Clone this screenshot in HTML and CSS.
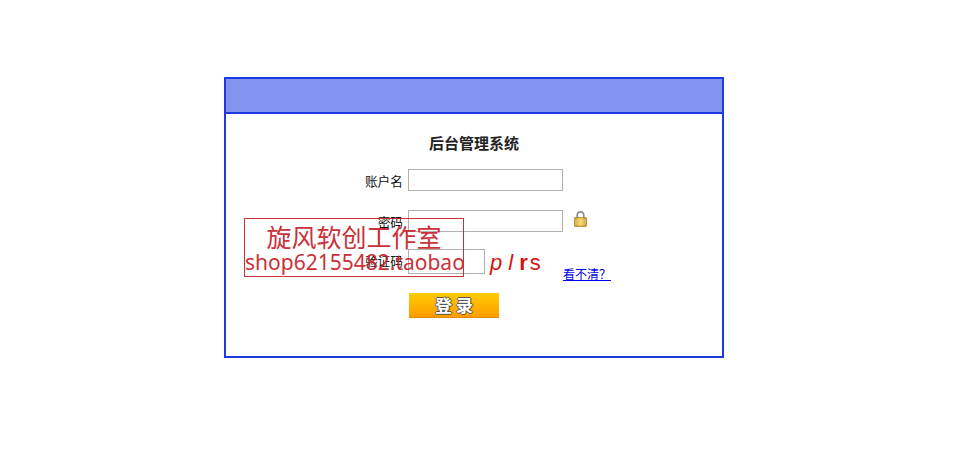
FILE: index.html
```html
<!DOCTYPE html>
<html lang="zh">
<head>
<meta charset="utf-8">
<title>后台管理系统</title>
<link rel="stylesheet" href="styles.css">
</head>
<body>
<div class="panel">
  <div class="panel-head"></div>
  <div class="panel-body">
    <h1 class="title">后台管理系统</h1>
    <form class="form">
      <div class="row row-user">
        <label class="label">账户名</label>
        <input class="input" type="text">
      </div>
      <div class="row row-pass">
        <label class="label">密码</label>
        <input class="input" type="password">
        <svg class="lock" width="13" height="16" viewBox="0 0 13 16">
          <defs>
            <linearGradient id="lockbody" x1="0" y1="0" x2="1" y2="0">
              <stop offset="0" stop-color="#c09028"/>
              <stop offset=".5" stop-color="#f4cf62"/>
              <stop offset="1" stop-color="#b88a24"/>
            </linearGradient>
          </defs>
          <path d="M3.200 7V4.200a3.300 3.300 0 0 1 6.600 0V7" fill="none" stroke="#8c8c8c" stroke-width="1.700"/>
          <rect x=".5" y="6.500" width="12" height="9" rx=".8" fill="url(#lockbody)" stroke="#a87e22" stroke-width=".7"/>
          <path d="M1 9h11M1 11h11M1 13h11" stroke="#fff0a8" stroke-width=".8" opacity=".75"/>
        </svg>
      </div>
      <div class="row row-code">
        <label class="label">验证码</label>
        <input class="input input-code" type="text">
        <span class="captcha"><i>p</i><i>l</i><b>r</b><span>s</span></span>
        <a class="refresh" href="#">看不清？</a>
      </div>
      <button class="submit" type="button">登&nbsp;录</button>
    </form>
  </div>
</div>
<div class="stamp">
  <div class="stamp-name">旋风软创工作室</div>
  <div class="stamp-shop">shop62155482.taobao</div>
</div>
</body>
</html>
```
FILE: styles.css
```css
* { box-sizing: border-box; }
html, body { margin: 0; padding: 0; }
body {
  background: #fff;
  color: #111;
  font-family: "Liberation Sans", "Noto Sans CJK SC", sans-serif;
  font-size: 13px;
  padding: 77px 0 0 224px;
  position: relative;
  height: 455px;
  overflow: hidden;
}
.panel {
  width: 500px;
  height: 281px;
  border: 2px solid #1c3ae0;
}
.panel-head {
  height: 35px;
  background: #8094f0;
  border-bottom: 2px solid #1c3ae0;
}
.panel-body { padding-top: 21px; }
.title {
  margin: 0 0 16px 203px;
  font-size: 15px;
  line-height: 18px;
  font-weight: 700;
  color: #222;
}
.form { display: flex; flex-direction: column; }
.row { display: flex; align-items: flex-start; }
.row-user { height: 41px; }
.row-pass { height: 39px; }
.row-code { height: 44px; }
.label {
  width: 177px;
  margin-right: 5px;
  text-align: right;
  font-size: 12.700px;
  line-height: 26px;
  color: #111;
}
.input {
  width: 155px;
  height: 22px;
  margin: 0;
  padding: 0 2px;
  border: 1px solid #b0b0b0;
  background: #fff;
}
.input-code { width: 77px; height: 25px; }
.lock { margin: 1px 0 0 11px; }
.captcha {
  display: flex;
  align-items: baseline;
  margin: -1px 0 0 5px;
  width: 73px;
  color: #d8140c;
  font-size: 22px;
  line-height: 30px;
  font-family: "Liberation Sans", sans-serif;
}
.captcha i { margin-right: 6px; }
.captcha b { margin-right: 2px; }
.refresh {
  margin-top: 18px;
  font-size: 12px;
  line-height: 17px;
  color: #0000ee;
  text-decoration: underline;
  white-space: nowrap;
}
.submit {
  width: 90px;
  height: 25px;
  margin-left: 183px;
  padding: 0;
  border: 0;
  border-bottom: 1px solid #e08a00;
  background: linear-gradient(#ffcc00, #ffb400 50%, #ff9c00);
  color: #fff;
  font-family: "Noto Sans CJK SC", sans-serif;
  font-size: 17px;
  font-weight: 700;
  line-height: 24px;
  text-shadow: 1px 0 0 #555, -1px 0 0 #555, 0 1px 0 #555, 0 -1px 0 #555;
}
.stamp {
  position: absolute;
  left: 244px;
  top: 218px;
  width: 220px;
  height: 59px;
  border: 1px solid #c62028;
  color: #c62028;
  text-align: center;
  opacity: .92;
  overflow: hidden;
}
.stamp-name {
  font-family: "Noto Sans CJK SC", sans-serif;
  font-size: 25px;
  line-height: 35px;
}
.stamp-shop {
  font-family: "Noto Sans", sans-serif;
  font-size: 21px;
  line-height: 15px;
  margin-top: 1px;
  white-space: nowrap;
}
```
